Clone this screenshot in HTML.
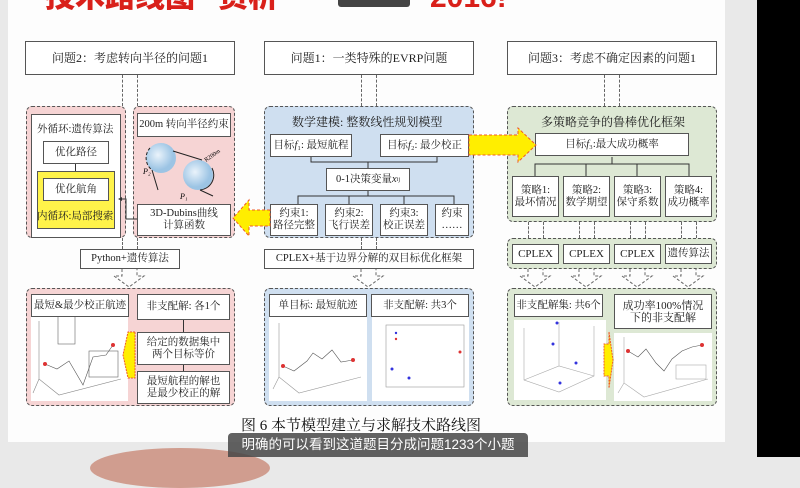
<!DOCTYPE html>
<html><head><meta charset="utf-8"><style>
*{margin:0;padding:0;box-sizing:border-box}
body{width:800px;height:457px;overflow:hidden;background:#e9e9e9;position:relative;font-family:"Liberation Serif","Noto Serif CJK SC",serif;color:#222}
.a{position:absolute}
.b{position:absolute;background:#fff;border:1px solid #555;display:flex;align-items:center;justify-content:center;text-align:center;font-size:10.5px;line-height:12px}
.p{position:absolute;border:1.2px dashed #555;border-radius:6px}
.pink{background:#f6d4d4}.blue{background:#cfdff0}.green{background:#dde8d4}
.vd{position:absolute;width:0;border-left:1px dashed #666}
.t{position:absolute;font-size:11px;white-space:nowrap}
.ch{position:absolute;background:#fff}
.z{z-index:5}
</style></head><body>
<div class="a" style="left:8px;top:0;width:717px;height:442px;background:#fdfdfd"></div>
<div class="a" style="left:757px;top:0;width:43px;height:457px;background:#000"></div>
<div class="a" style="left:90px;top:448px;width:180px;height:40px;border-radius:50%;background:#c98a78;opacity:.8"></div>
<!-- title -->
<div class="a" style="left:45px;top:-17px;font-family:'Liberation Sans','Noto Sans CJK SC',sans-serif;font-weight:900;font-size:30px;color:#d9201a;line-height:30px;white-space:nowrap">技术路线图 “资析</div>
<div class="a" style="left:338px;top:0;width:72px;height:7px;background:#444;border-radius:0 0 3px 3px"></div>
<div class="a" style="left:430px;top:-17px;font-family:'Liberation Sans',sans-serif;font-weight:900;font-size:30px;color:#d9201a;line-height:30px">2016!</div>

<!-- top boxes -->
<div class="b" style="left:25px;top:41px;width:210px;height:34px;font-size:12px">问题2：考虑转向半径的问题1</div>
<div class="b" style="left:264px;top:41px;width:210px;height:34px;font-size:12px">问题1：一类特殊的EVRP问题</div>
<div class="b" style="left:507px;top:41px;width:210px;height:34px;font-size:12px">问题3：考虑不确定因素的问题1</div>
<div class="vd" style="left:122px;top:75px;height:31px"></div><div class="vd" style="left:137px;top:75px;height:31px"></div>
<div class="vd" style="left:361px;top:75px;height:31px"></div><div class="vd" style="left:376px;top:75px;height:31px"></div>
<div class="vd" style="left:604px;top:75px;height:31px"></div><div class="vd" style="left:619px;top:75px;height:31px"></div>

<!-- left panels -->
<div class="p pink" style="left:26px;top:106px;width:100px;height:132px"></div>
<div class="a" style="left:31px;top:114px;width:90px;height:124px;background:#fff;border:1px solid #555"></div>
<div class="t" style="left:37px;top:121px;font-size:10.5px">外循环:遗传算法</div>
<div class="b" style="left:43px;top:141px;width:66px;height:23px">优化路径</div>
<div class="a" style="left:75px;top:164px;width:1px;height:14px;background:#333"></div>
<div class="a" style="left:37px;top:171px;width:78px;height:58px;background:#fff34a;border:1px solid #555"></div>
<div class="b" style="left:43px;top:178px;width:66px;height:23px">优化航角</div>
<div class="t" style="left:37px;top:208px;font-size:10.5px">内循环:局部搜索</div>
<div class="p pink" style="left:133px;top:106px;width:102px;height:132px"></div>
<div class="b" style="left:137px;top:113px;width:94px;height:24px">200m 转向半径约束</div>
<svg class="a" style="left:138px;top:138px" width="95" height="64">
<defs><radialGradient id="g" cx="40%" cy="40%"><stop offset="0" stop-color="#eaf3fb"/><stop offset="1" stop-color="#9cc4e4"/></radialGradient></defs>
<circle cx="23" cy="20" r="15" fill="url(#g)"/><circle cx="60" cy="37" r="15" fill="url(#g)"/>
<path d="M12 10 A15 15 0 0 0 14 32" fill="none" stroke="#222" stroke-dasharray="3 2"/>
<path d="M35 13 L64 22 M74 30 A15 15 0 0 1 62 52 M14 32 L20 52 M62 52 L75 58" stroke="#222" fill="none"/>
<text x="5" y="36" font-size="8" font-style="italic">P₂</text><text x="42" y="61" font-size="8" font-style="italic">P₁</text>
<text x="68" y="24" font-size="6" transform="rotate(-35 68 24)">R200m</text></svg>
<div class="b" style="left:137px;top:204px;width:94px;height:32px">3D-Dubins曲线<br>计算函数</div>
<svg class="a" style="left:118px;top:196px" width="20" height="24"><path d="M19 23 H8 V3 H2" fill="none" stroke="#333"/><path d="M0 3 L4 1 V5Z" fill="#333"/></svg>

<!-- middle panel -->
<div class="p blue" style="left:264px;top:106px;width:210px;height:132px"></div>
<div class="t" style="left:292px;top:113px;font-size:12px">数学建模: 整数线性规划模型</div>
<div class="b" style="left:270px;top:134px;width:82px;height:23px">目标 <i>f</i>₁: 最短航程</div>
<div class="b" style="left:380px;top:134px;width:89px;height:23px">目标 <i>f</i>₂: 最少校正</div>
<svg class="a" style="left:264px;top:156px" width="210" height="50"><path d="M47 1 V6 H173 V1 M104 6 V12 M104 34 V40 H34 V48 M104 40 H190 V48 M85 40 V48 M140 40 V48" fill="none" stroke="#333"/></svg>
<div class="b" style="left:326px;top:168px;width:84px;height:23px">0-1决策变量<i>x</i><sub style="font-size:6px">ij</sub></div>
<div class="b" style="left:270px;top:204px;width:48px;height:32px">约束1:<br>路径完整</div>
<div class="b" style="left:325px;top:204px;width:48px;height:32px">约束2:<br>飞行误差</div>
<div class="b" style="left:380px;top:204px;width:48px;height:32px">约束3:<br>校正误差</div>
<div class="b" style="left:435px;top:204px;width:34px;height:32px">约束<br>……</div>

<!-- right panel -->
<div class="p green" style="left:507px;top:106px;width:210px;height:116px"></div>
<div class="t" style="left:541px;top:113px;font-size:12px">多策略竞争的鲁棒优化框架</div>
<div class="b" style="left:535px;top:133px;width:154px;height:23px">目标 <i>f</i>₃:最大成功概率</div>
<svg class="a" style="left:507px;top:156px" width="210" height="22"><path d="M105 1 V8 H28 V20 M105 8 H182 V20 M79 8 V20 M130 8 V20" fill="none" stroke="#333"/></svg>
<div class="b" style="left:512px;top:176px;width:47px;height:41px">策略1:<br>最坏情况</div>
<div class="b" style="left:563px;top:176px;width:47px;height:41px">策略2:<br>数学期望</div>
<div class="b" style="left:614px;top:176px;width:47px;height:41px">策略3:<br>保守系数</div>
<div class="b" style="left:665px;top:176px;width:47px;height:41px">策略4:<br>成功概率</div>
<div class="vd" style="left:528px;top:222px;height:16px"></div><div class="vd" style="left:543px;top:222px;height:16px"></div>
<div class="vd" style="left:579px;top:222px;height:16px"></div><div class="vd" style="left:594px;top:222px;height:16px"></div>
<div class="vd" style="left:630px;top:222px;height:16px"></div><div class="vd" style="left:645px;top:222px;height:16px"></div>
<div class="vd" style="left:681px;top:222px;height:16px"></div><div class="vd" style="left:696px;top:222px;height:16px"></div>
<div class="p green" style="left:507px;top:238px;width:210px;height:31px"></div>
<div class="b" style="left:512px;top:244px;width:47px;height:20px;font-size:11px">CPLEX</div>
<div class="b" style="left:563px;top:244px;width:47px;height:20px;font-size:11px">CPLEX</div>
<div class="b" style="left:614px;top:244px;width:47px;height:20px;font-size:11px">CPLEX</div>
<div class="b" style="left:665px;top:244px;width:47px;height:20px">遗传算法</div>

<!-- yellow arrows -->
<svg class="a z" style="left:232px;top:198px" width="40" height="40"><path d="M38 12 H17 V2 L1 20 L17 38 V28 H38Z" fill="#ffee00" stroke="#f05a28" stroke-dasharray="3 2"/></svg>
<svg class="a z" style="left:468px;top:127px" width="70" height="36"><path d="M1 8 H50 V1 L68 18 L50 35 V28 H1Z" fill="#ffee00" stroke="#f05a28" stroke-dasharray="3 2"/></svg>

<div class="vd" style="left:122px;top:238px;height:11px"></div><div class="vd" style="left:137px;top:238px;height:11px"></div>
<div class="vd" style="left:361px;top:238px;height:11px"></div><div class="vd" style="left:376px;top:238px;height:11px"></div>
<div class="b" style="left:80px;top:249px;width:100px;height:20px">Python+遗传算法</div>
<div class="b" style="left:264px;top:249px;width:210px;height:20px">CPLEX+基于边界分解的双目标优化框架</div>
<!-- hollow down arrows -->
<svg class="a" style="left:0;top:268px" width="725" height="21" fill="none" stroke="#666" stroke-dasharray="3 2">
<path d="M122 1 V8 H114 L129 19 L144 8 H137 V1"/>
<path d="M361 1 V8 H353 L368 19 L383 8 H376 V1"/>
<path d="M528 1 V8 H520 L535 19 L550 8 H543 V1"/>
<path d="M579 1 V8 H571 L586 19 L601 8 H594 V1"/>
<path d="M630 1 V8 H622 L637 19 L652 8 H645 V1"/>
<path d="M681 1 V8 H673 L688 19 L703 8 H696 V1"/>
</svg>

<!-- bottom panels -->
<div class="p pink" style="left:26px;top:288px;width:209px;height:118px"></div>
<div class="b" style="left:31px;top:294px;width:98px;height:23px">最短&amp;最少校正航迹</div>
<div class="ch" style="left:31px;top:317px;width:97px;height:84px"></div>
<svg class="a" style="left:31px;top:317px" width="97" height="84" fill="none" stroke="#888" stroke-width=".6">
<path d="M8 4 V62 L28 78 L90 62 M8 62 L2 76"/><rect x="27" y="-5" width="17" height="32" stroke="#666"/><rect x="58" y="34" width="29" height="26" stroke="#666"/>
<path d="M14 47 L26 52 L38 44 L52 68 L62 40 L75 38 L82 28" stroke="#555"/>
<circle cx="14" cy="47" r="2" fill="#d33" stroke="none"/><circle cx="82" cy="28" r="2" fill="#d33" stroke="none"/></svg>
<svg class="a z" style="left:122px;top:318px" width="14" height="74"><path d="M13 14 H6 L1 37 L6 60 H13Z" fill="#ffee00" stroke="#f05a28" stroke-dasharray="2 1"/></svg>
<div class="b" style="left:137px;top:294px;width:93px;height:26px">非支配解: 各1个</div>
<div class="b" style="left:137px;top:332px;width:93px;height:33px">给定的数据集中<br>两个目标等价</div>
<div class="b" style="left:137px;top:371px;width:93px;height:33px">最短航程的解也<br>是最少校正的解</div>
<div class="a" style="left:183px;top:320px;width:1px;height:12px;background:#333"></div>
<div class="a" style="left:183px;top:365px;width:1px;height:6px;background:#333"></div>

<div class="p blue" style="left:264px;top:288px;width:210px;height:118px"></div>
<div class="b" style="left:269px;top:294px;width:98px;height:23px">单目标: 最短航迹</div>
<div class="b" style="left:371px;top:294px;width:98px;height:23px">非支配解: 共3个</div>
<div class="ch" style="left:269px;top:317px;width:98px;height:84px"></div>
<div class="ch" style="left:372px;top:317px;width:97px;height:84px"></div>
<svg class="a" style="left:269px;top:317px" width="98" height="84" fill="none" stroke="#999" stroke-width=".6">
<path d="M10 6 V60 L30 76 L92 60 M10 60 L4 72"/>
<path d="M14 49 L25 54 L38 44 L44 36 L53 42 L63 33 L72 45 L84 43" stroke="#555"/>
<circle cx="14" cy="49" r="2" fill="#d33" stroke="none"/><circle cx="84" cy="43" r="2" fill="#d33" stroke="none"/></svg>
<svg class="a" style="left:372px;top:317px" width="97" height="84" fill="none" stroke="#999" stroke-width=".6">
<rect x="14" y="8" width="78" height="62"/><circle cx="24" cy="16" r="1.2" fill="#33d" stroke="none"/><circle cx="24" cy="22" r="1.2" fill="#d33" stroke="none"/>
<circle cx="20" cy="52" r="1.5" fill="#33d" stroke="none"/><circle cx="37" cy="61" r="1.5" fill="#33d" stroke="none"/><circle cx="88" cy="35" r="1.5" fill="#d33" stroke="none"/></svg>

<div class="p green" style="left:507px;top:288px;width:210px;height:118px"></div>
<div class="b" style="left:514px;top:294px;width:89px;height:23px">非支配解集: 共6个</div>
<div class="ch" style="left:514px;top:320px;width:92px;height:80px"></div>
<svg class="a" style="left:514px;top:320px" width="92" height="80" fill="none" stroke="#aaa" stroke-width=".6">
<path d="M10 8 V60 L45 72 L80 56 V6 M10 60 L45 46 L80 56 M45 46 V2"/>
<circle cx="43" cy="3" r="1.5" fill="#33d" stroke="none"/><circle cx="39" cy="24" r="1.5" fill="#33d" stroke="none"/><circle cx="62" cy="43" r="1.5" fill="#33d" stroke="none"/><circle cx="46" cy="63" r="1.5" fill="#33d" stroke="none"/></svg>
<svg class="a z" style="left:603px;top:330px" width="14" height="60"><path d="M6 2 L10 30 L6 58 V46 H1 V14 H6Z" fill="#ffee00" stroke="#f05a28" stroke-dasharray="2 1"/></svg>
<div class="b" style="left:614px;top:294px;width:98px;height:35px;font-size:11px">成功率100%情况<br>下的非支配解</div>
<div class="ch" style="left:614px;top:333px;width:98px;height:68px"></div>
<svg class="a" style="left:614px;top:333px" width="98" height="68" fill="none" stroke="#aaa" stroke-width=".6">
<path d="M10 4 V50 L30 64 L94 46 M10 50 L4 60"/>
<path d="M14 18 L24 24 L32 16 L42 30 L50 38 L58 26 L68 18 L78 14 L88 12" stroke="#555"/>
<circle cx="14" cy="18" r="2" fill="#d33" stroke="none"/><circle cx="88" cy="12" r="2" fill="#d33" stroke="none"/>
<rect x="62" y="32" width="30" height="14" fill="#fff"/></svg>

<div class="t" style="left:241px;top:414px;font-size:15px;color:#111">图 6  本节模型建立与求解技术路线图</div>
<div class="a" style="left:228px;top:433px;width:300px;height:24px;background:rgba(70,70,70,.85);border-radius:4px 4px 0 0;color:#fff;font-family:'Liberation Sans','Noto Sans CJK SC',sans-serif;font-size:13.5px;line-height:24px;text-align:center;z-index:6">明确的可以看到这道题目分成问题1233个小题</div>
</body></html>
